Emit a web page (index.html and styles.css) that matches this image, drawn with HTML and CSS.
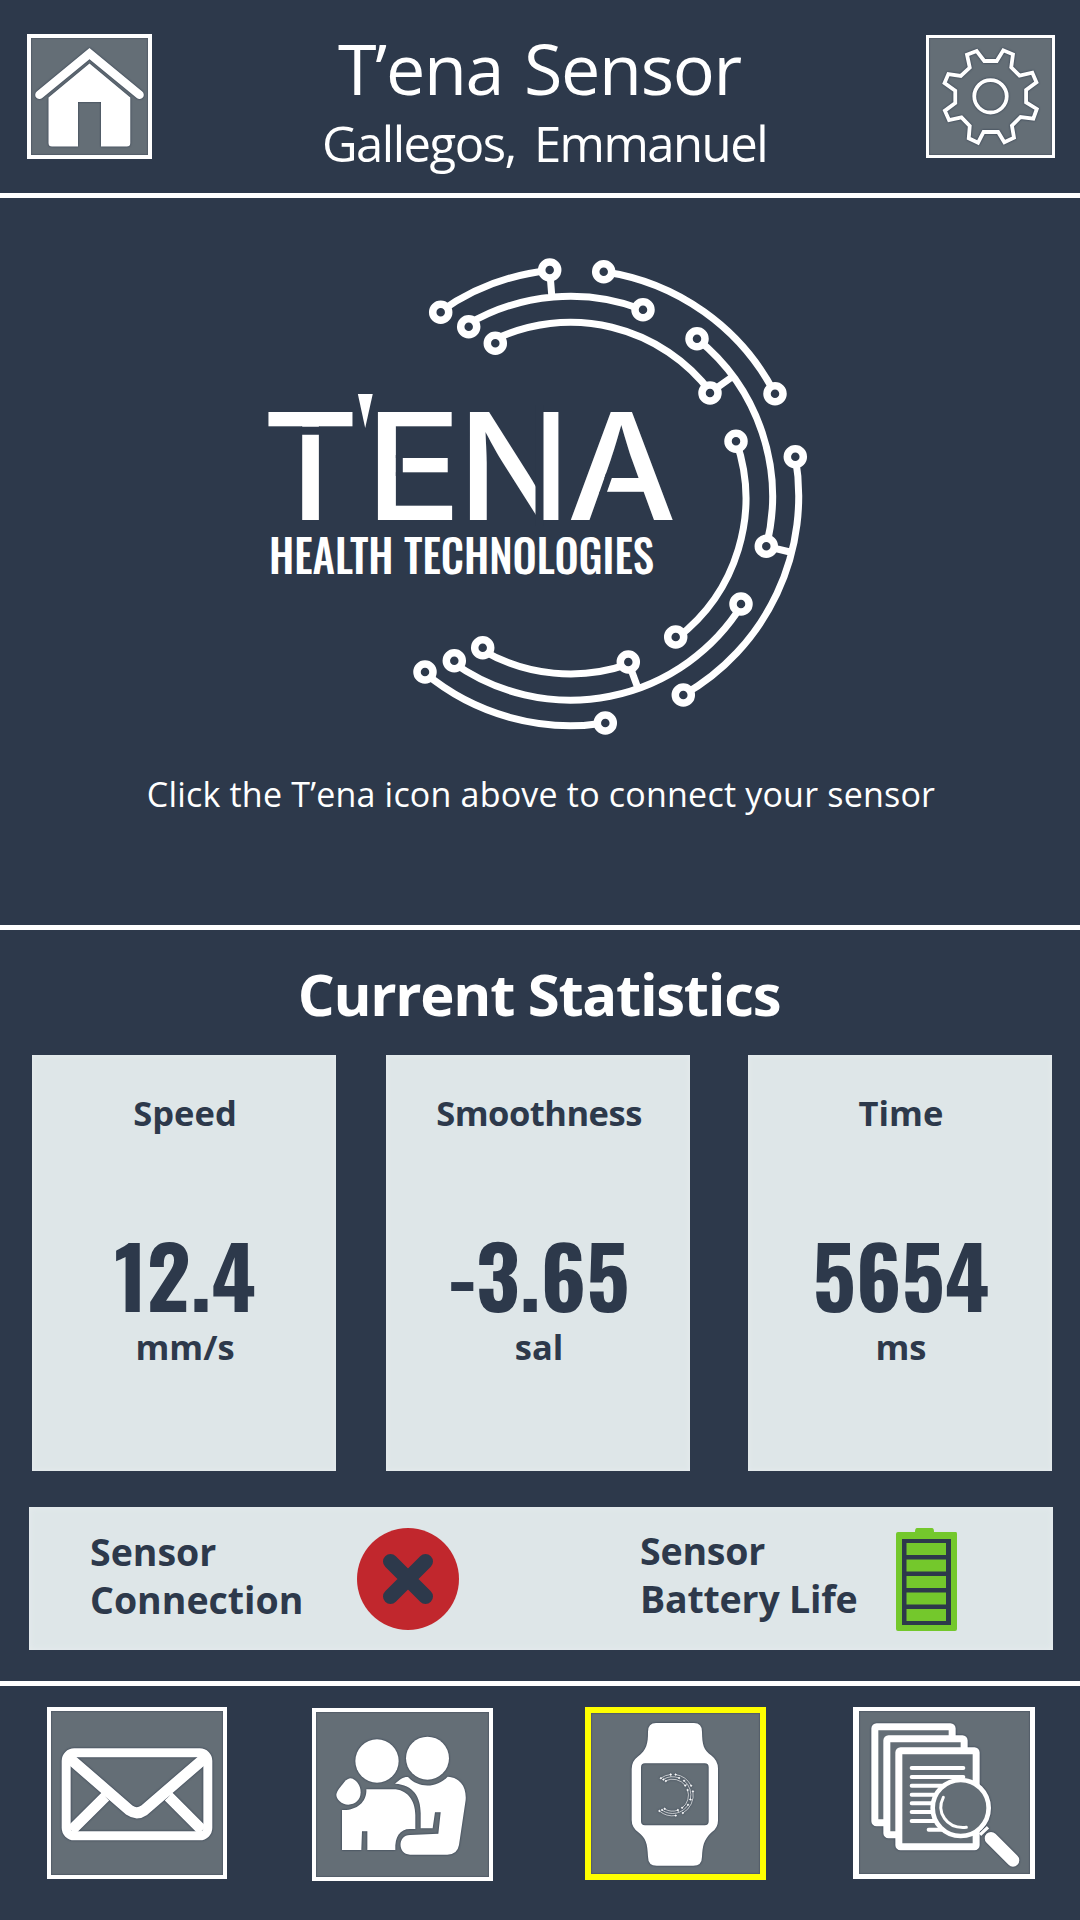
FILE: index.html
```html
<!DOCTYPE html>
<html lang="en">
<head>
<meta charset="utf-8">
<title>T’ena Sensor</title>
<link rel="stylesheet" href="styles.css">
</head>
<body>
<div class="app">
  <header class="header">
    <button class="tile tile-home" aria-label="Home">
      <svg viewBox="31 38 117 115">
        <path class="line" stroke-width="8.6" stroke-linecap="round" stroke-linejoin="miter" d="M39.5 93.8 89.5 52.6 139.5 93.8"/>
        <path class="solid" d="M89.5 62.5 130.3 96.5V142q0 3.5-3.5 3.5H101V101H78v44.500H52q-3.500 0-3.500-3.500V96.500Z"/>
      </svg>
    </button>
    <div class="heading">
      <h1 class="title">T’ena Sensor</h1>
      <p class="patient">Gallegos, Emmanuel</p>
    </div>
    <button class="tile tile-settings" aria-label="Settings">
      <svg viewBox="1130 114 356 351" preserveAspectRatio="none">
        <path class="line gear" d="M1290 183H1326L1345 151 1373 163 1368 202 1392 227 1429 218 1441 247 1411 270V307L1442 327 1432 356 1395 351 1370 377 1376 413 1348 427 1330 396H1288L1272 428 1245 415 1248 378 1224 352 1188 360 1176 332 1206 309V272L1175 249 1186 222 1222 228 1248 203 1240 164 1268 153Z"/>
        <ellipse class="line gear" cx="1308" cy="289" rx="47" ry="48.500"/>
      </svg>
    </button>
  </header>

  <section class="connect">
    <svg class="logo" viewBox="265 250 550 490" role="img" aria-label="T'ena Health Technologies">
      <defs>
        <g id="circuit">
          <path class="trace" d="M440.300 311.600A228 228 0 0 1 549.700 270.500M467.400 324.500A202 202 0 0 1 643 309.700M493.900 339.900A175.700 175.700 0 0 1 710.900 392.400M603.700 271.700A229 229 0 0 1 775 393.700M697 338.700A202.500 202.500 0 0 1 766.300 546.300M736.300 441.300A175.700 175.700 0 0 1 676.600 638.200M795.300 456.700A229 229 0 0 1 683.300 695M742.100 604.700A202 202 0 0 1 453 662.500M629 663.900A175.700 175.700 0 0 1 481.500 649.700M605.300 723A228 228 0 0 1 424.600 672.800M549.700 270 551.800 296M710 392.700 732 377M766.300 546.300 790 552M628.300 662 637.500 687"/>
          <g class="node">
            <circle cx="440.700" cy="312.300" r="8"/><circle cx="468.700" cy="326.700" r="8"/>
            <circle cx="495.300" cy="343.300" r="8"/><circle cx="549.700" cy="270" r="8"/>
            <circle cx="603.700" cy="271.700" r="8"/><circle cx="643" cy="309.700" r="8"/>
            <circle cx="697" cy="338.700" r="8"/><circle cx="710" cy="393" r="8"/>
            <circle cx="775" cy="393.700" r="8"/><circle cx="736" cy="441.300" r="8"/>
            <circle cx="795.300" cy="456.700" r="8"/><circle cx="766.300" cy="546.300" r="8"/>
            <circle cx="741" cy="604" r="8"/><circle cx="675.700" cy="637" r="8"/>
            <circle cx="628.300" cy="662" r="8"/><circle cx="683.300" cy="695" r="8"/>
            <circle cx="605.300" cy="723" r="8"/><circle cx="482.700" cy="647.700" r="8"/>
            <circle cx="454.300" cy="660.700" r="8"/><circle cx="425" cy="672" r="8"/>
          </g>
        </g>
        <clipPath id="wedge"><polygon points="357.800,393.700 372.800,393.700 365.200,428"/></clipPath>
      </defs>
      <use href="#circuit"/>
      <g class="wordmark">
        <text x="262" y="519.700">T</text>
        <g clip-path="url(#wedge)"><text class="mark" x="341" y="501.500">'</text></g>
        <text x="365" y="519.700" textLength="97" lengthAdjust="spacingAndGlyphs">E</text>
        <text x="458" y="519.700">N</text>
        <text x="567" y="519.700" textLength="109.500" lengthAdjust="spacingAndGlyphs">A</text>
      </g>
      <path class="cut" stroke-width="8" d="M301 430.700H320M539.500 405V526"/>
      <path class="cut" stroke-width="7" d="M399.300 455V476M609.500 474 602.500 494"/>
      <text class="tagline" x="269" y="574" textLength="385" lengthAdjust="spacingAndGlyphs">HEALTH TECHNOLOGIES</text>
    </svg>
    <p class="hint">Click the T’ena icon above to connect your sensor</p>
  </section>

  <section class="stats">
    <h2 class="stats-title">Current Statistics</h2>
    <div class="cards">
      <article class="card">
        <h3 class="label">Speed</h3>
        <p class="value">12.4</p>
        <p class="unit">mm/s</p>
      </article>
      <article class="card">
        <h3 class="label label-long">Smoothness</h3>
        <p class="value">-3.65</p>
        <p class="unit">sal</p>
      </article>
      <article class="card">
        <h3 class="label">Time</h3>
        <p class="value">5654</p>
        <p class="unit">ms</p>
      </article>
    </div>
    <div class="status">
      <p class="status-label">Sensor<br>Connection</p>
      <svg class="status-x" viewBox="0 0 102 102">
        <circle cx="51" cy="51" r="51" fill="#c1272d"/>
        <path d="M33.500 33.500 68.500 68.500M68.500 33.500 33.500 68.500" stroke="#2d394b" stroke-width="15" stroke-linecap="round"/>
      </svg>
      <p class="status-label status-label-battery">Sensor<br>Battery Life</p>
      <svg class="status-battery" viewBox="0 0 61 103">
        <path fill="#74c82c" d="M21 0H36Q38 0 38 4H60Q61 4 61 6V101Q61 103 59 103H2Q0 103 0 101V6Q0 4 2 4H19Q19 0 21 0Z"/>
        <path fill="#2d394b" d="M6 11H55V97H6Z"/>
        <path fill="#74c82c" d="M10.500 15H50V27H10.500ZM10.500 31.500H50V43.500H10.500ZM10.500 48H50V60H10.500ZM10.500 64.500H50V76.500H10.500ZM10.500 81H50V93H10.500Z"/>
      </svg>
    </div>
  </section>

  <nav class="nav">
    <button class="tile tile-mail" aria-label="Messages">
      <svg viewBox="63 63 516 492">
        <rect class="line" x="108.500" y="188.500" width="425" height="249" rx="24" stroke-width="27"/>
        <path class="line" stroke-width="33" d="M119 205 299 361Q320 376 342 361L523 205M226 320 124 421M416 320 517 421"/>
      </svg>
    </button>
    <button class="tile tile-people" aria-label="Care team">
      <svg viewBox="858 66 519 495">
        <circle class="solid" cx="1041" cy="213" r="65"/>
        <circle class="solid" cx="1192.500" cy="204.500" r="64.500"/>
        <path class="solid" d="M962 265C977 267 992 285 992 307 992 330 975 344 955 344 935 344 918 326 919 314 920 305 926 297 943 276Q953 265 962 265Z"/>
        <path class="solid" d="M1009 298H1090C1130 298 1156 330 1156 375V417H1140C1110 417 1094 440 1096 480H1012V424H996L994 480H936V360C975 363 1011 340 1009 298Z"/>
        <path class="solid" d="M1095 281C1110 268 1120 260 1134 261 1165 295 1220 295 1253 260 1290 262 1310 290 1307 330L1287 465Q1282 494 1252 494H1140C1102 494 1102 435 1140 435L1225 431 1232 367H1215L1208 415H1172V370C1172 320 1150 285 1095 281Z"/>
      </svg>
    </button>
    <button class="tile tile-watch" aria-label="Sensor">
      <svg viewBox="93 69 507 483">
        <path class="solid" fill-rule="evenodd" d="M288 99H402Q426 99 426 125C427 165 430 178 455 197Q474 212 474 235V392Q474 413 455 427C430 450 428 470 426 500Q426 527 400 527H290Q264 527 264 500C262 460 258 445 235 427Q215 412 215 390V237Q215 213 233 200C260 180 264 160 264 125Q264 99 288 99ZM255 220Q243 220 243 232V394Q243 406 255 406H434Q446 406 446 394V232Q446 220 434 220Z"/>
        <use class="mini" href="#circuit" transform="translate(182.900 179.700) scale(.2715 .2725)"/>
      </svg>
    </button>
    <button class="tile tile-reports" aria-label="Reports">
      <svg viewBox="87 63 513 489">
        <g class="line sheet" stroke-width="21">
          <rect x="134.500" y="110.500" width="232" height="288" rx="5"/>
          <rect x="170.500" y="146.500" width="232" height="288" rx="5"/>
          <rect x="206.500" y="182.500" width="232" height="288" rx="5"/>
        </g>
        <path class="line" stroke-width="12" stroke-linecap="round" d="M245 234H400M245 261H400M245 287H340M245 314H340M245 340H330M245 366H330M245 393H330M296 419H345"/>
        <circle class="line sheet" cx="392" cy="354" r="84" stroke-width="14"/>
        <path class="line" stroke-width="9" stroke-linecap="round" d="M340 322C318 365 348 418 409 412"/>
        <path class="line" stroke-width="10" d="M450 434 474 412"/>
        <path class="line" stroke-width="38" stroke-linecap="round" d="M483 445 549 511"/>
      </svg>
    </button>
  </nav>
</div>
</body>
</html>
```
FILE: styles.css
```css
* { box-sizing: border-box; }

body, h1, h2, h3, p { margin: 0; }

body {
  background: #2d394b;
  color: #fff;
  font-family: "Open Sans", "Noto Sans", sans-serif;
}

.app {
  --navy: #2d394b;
  --slate: #646e76;
  width: 1080px;
  height: 1920px;
  overflow: hidden;
}

/* Square icon buttons */
.tile {
  display: block;
  padding: 0;
  border: 4px solid #fff;
  background: var(--slate);
  box-shadow: inset 0 0 1px 1px rgba(45, 57, 75, .3);
}

.tile svg { display: block; width: 100%; height: 100%; filter: drop-shadow(0 0 1px #2d394b); }
.line { fill: none; stroke: #fff; }
.solid { fill: #fff; }
.sheet { fill: var(--slate); }

/* Header */
.header {
  display: flex;
  justify-content: space-between;
  height: 198px;
  padding: 34px 25px 0 27px;
  border-bottom: 5px solid #fff;
}

.tile-home { width: 125px; height: 125px; }
.tile-settings { width: 129px; height: 123px; margin-top: 1px; border-width: 3px; }
.gear { stroke-width: 3.8px; vector-effect: non-scaling-stroke; }

.heading { margin-top: -1px; text-align: center; white-space: nowrap; }
.title { padding-left: 1px; font-size: 70px; font-weight: 400; line-height: 70px; letter-spacing: -1.3px; word-spacing: 4px; }
.patient { margin-top: 10px; padding-left: 11px; font-size: 49px; line-height: 60px; letter-spacing: -1.5px; word-spacing: 7px; }

/* Connect panel */
.connect {
  display: flex;
  flex-direction: column;
  align-items: center;
  height: 732px;
  padding-top: 52px;
  border-bottom: 5px solid #fff;
}

.logo { width: 550px; height: 490px; }
.trace { fill: none; stroke: #fff; stroke-width: 7; }
.node { fill: var(--navy); stroke: #fff; stroke-width: 7.5; }
.wordmark { fill: #fff; font-family: Inter, sans-serif; font-size: 148.5px; font-weight: 500; }
.mark { font-weight: 700; }
.cut { fill: none; stroke: var(--navy); }
.tagline { fill: #fff; font-family: Oswald, "Roboto Condensed", Roboto, sans-serif; font-size: 46.5px; font-weight: 500; }
.hint { margin-top: 31px; padding-left: 2px; font-size: 34px; line-height: 46px; letter-spacing: .2px; white-space: nowrap; }

/* Statistics */
.stats { height: 756px; padding-top: 29px; border-bottom: 5px solid #fff; }
.stats-title { padding-right: 2px; font-size: 58px; font-weight: 700; line-height: 70px; letter-spacing: -1.3px; text-align: center; }

.cards {
  display: grid;
  grid-template-columns: repeat(3, 304px);
  column-gap: 54px;
  height: 416px;
  margin: 26px 28px 0 32px;
}

.card {
  padding: 35px 0 0 2px;
  background: #dee6e8;
  box-shadow: inset 0 0 5px #e8edef;
  color: var(--navy);
  text-align: center;
}

.card:nth-child(2) { margin: 0 4px 0 -4px; }
.label, .unit { font-size: 34.5px; font-weight: 700; line-height: 46px; }
.label-long { letter-spacing: -.5px; }
.value {
  margin-top: 88px;
  font-family: Oswald, "Roboto Condensed", Roboto, sans-serif;
  font-size: 85px;
  font-weight: 700;
  line-height: 100px;
}
.unit { margin-top: 0; }

/* Sensor status */
.status {
  display: grid;
  grid-template-columns: 267px 284px 255px 61px;
  height: 143px;
  margin: 36px 27px 0 29px;
  padding: 21px 0 0 61px;
  background: #dee6e8;
  box-shadow: inset 0 0 6px #e8edef;
  color: var(--navy);
}

.status-label { font-size: 37.5px; font-weight: 700; line-height: 48px; }
.status-label-battery { margin: -1px 0 0 -1px; letter-spacing: -.2px; white-space: nowrap; }
.status-x { width: 102px; height: 102px; }
.status-battery { width: 61px; height: 103px; }

/* Bottom navigation */
.nav { display: flex; align-items: flex-start; padding: 21px 0 0 47px; }
.tile-mail { width: 180px; height: 172px; }
.tile-people { width: 181px; height: 173px; margin: 1px 0 0 85px; }
.tile-watch { width: 181px; height: 173px; margin-left: 92px; border: 6px solid #ff0; }
.tile-reports { width: 182px; height: 172px; margin-left: 87px; border-width: 4px 5px 5px 6px; }

/* Logo miniature on the watch face */
.mini { --navy: #fff; }
```
